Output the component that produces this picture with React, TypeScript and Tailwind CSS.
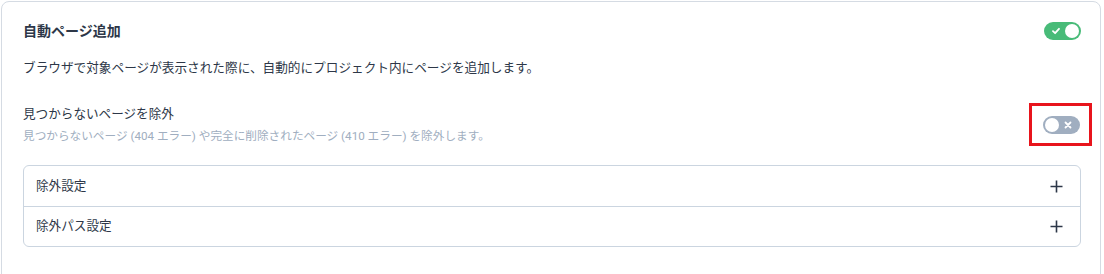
import React from "react";

function Toggle({ on }: { on: boolean }) {
  if (on) {
    return (
      <div className="relative h-[18px] w-[37px] rounded-full bg-[#48bb78]">
        <svg className="absolute left-[8px] top-[5px]" width="8" height="8" viewBox="0 0 8 8">
          <path d="M1 4.2 L3.1 6.2 L7 1.8" fill="none" stroke="#ffffff" strokeWidth="1.8" strokeLinecap="round" strokeLinejoin="round" />
        </svg>
        <div className="absolute right-[2px] top-[2px] h-[14px] w-[14px] rounded-full bg-white" />
      </div>
    );
  }
  return (
    <div className="relative h-[18px] w-[37px] rounded-full bg-[#a0aec0]">
      <div className="absolute left-[2px] top-[2px] h-[14px] w-[14px] rounded-full bg-white" />
      <svg className="absolute right-[8px] top-[5px]" width="8" height="8" viewBox="0 0 8 8">
        <path d="M1.5 1.5 L6.5 6.5 M6.5 1.5 L1.5 6.5" fill="none" stroke="#ffffff" strokeWidth="1.8" strokeLinecap="round" />
      </svg>
    </div>
  );
}

function Plus() {
  return (
    <svg width="13" height="13" viewBox="0 0 13 13">
      <path d="M6.5 0.5 V12.5 M0.5 6.5 H12.5" fill="none" stroke="#2d3748" strokeWidth="1.6" />
    </svg>
  );
}

export default function App() {
  return (
    <div
      className="min-h-[274px] w-[1104px] overflow-hidden bg-white pl-px pt-px"
      style={{ fontFamily: 'Roboto, "Noto Sans CJK JP", sans-serif' }}
    >
      <div className="h-[290px] w-[1100px] rounded-lg border border-[#d5dbe3] bg-white pl-[21px] pr-[19px] pt-[20px]">
        <div className="flex h-[18px] items-center justify-between">
          <div className="text-[14px] font-bold leading-[18px] text-[#2d3748]">自動ページ追加</div>
          <Toggle on={true} />
        </div>
        <div className="mt-[18px] text-[12.65px] leading-[20px] text-[#2d3748]">
          ブラウザで対象ページが表示された際に、自動的にプロジェクト内にページを追加します。
        </div>
        <div className="mt-[26px] flex items-center justify-between">
          <div>
            <div className="text-[12.6px] leading-[20px] text-[#2d3748]">見つからないページを除外</div>
            <div className="mt-[3px] text-[11.65px] leading-[18px] text-[#a0aec0]">
              見つからないページ (404 エラー) や完全に削除されたページ (410 エラー) を除外します。
            </div>
          </div>
          <div className="relative mr-px">
            <Toggle on={false} />
            <div className="pointer-events-none absolute bottom-[-12px] left-[-14px] right-[-12px] top-[-13px] border-[3px] border-[#e8141c]" />
          </div>
        </div>
        <div className="mt-[20px] rounded-md border border-[#cbd5e0]">
          <div className="flex h-[40px] items-center justify-between pl-[12px] pr-[17px]">
            <span className="text-[12.6px] text-[#2d3748]">除外設定</span>
            <Plus />
          </div>
          <div className="flex h-[40px] items-center justify-between border-t border-[#cbd5e0] pl-[12px] pr-[17px]">
            <span className="text-[12.6px] text-[#2d3748]">除外パス設定</span>
            <Plus />
          </div>
        </div>
      </div>
    </div>
  );
}
